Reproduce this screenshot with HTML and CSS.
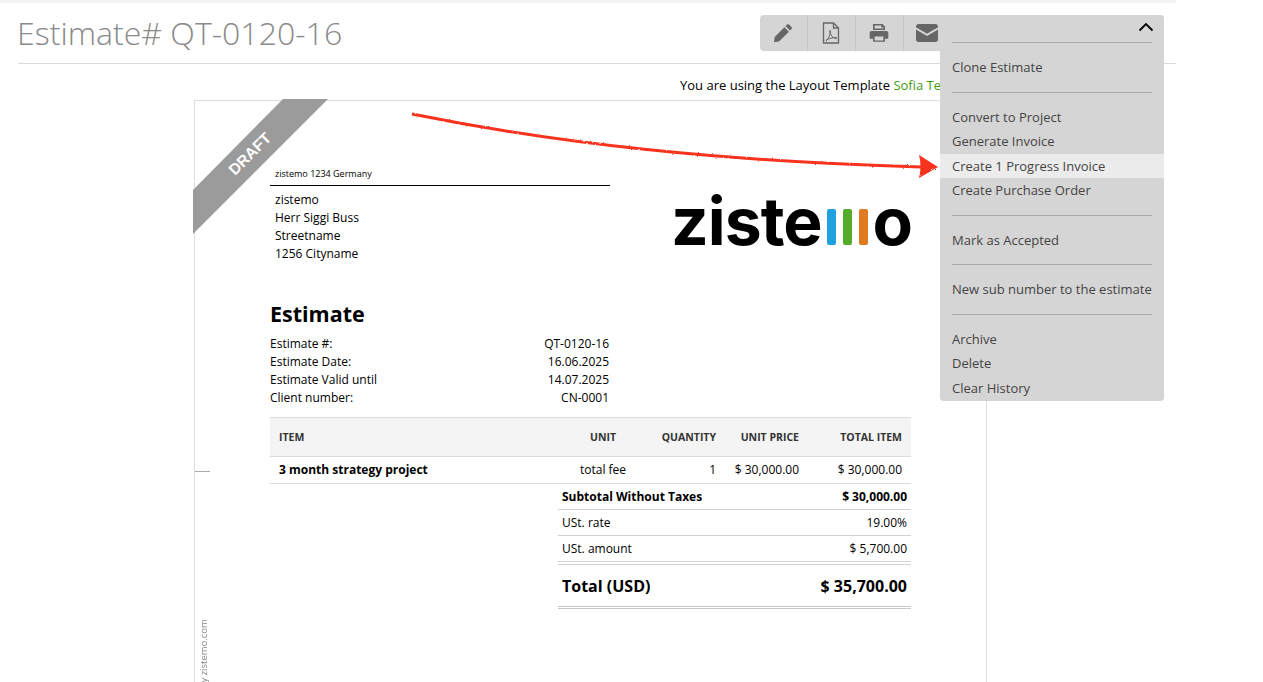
FILE: index.html
```html
<!DOCTYPE html>
<html lang="en">
<head>
<meta charset="utf-8">
<title>Estimate# QT-0120-16</title>
<link rel="stylesheet" href="styles.css">
</head>
<body>
<div class="topbar"></div>
<main class="wrap">
  <header class="head">
    <h1 class="title">Estimate# QT-0120-16</h1>
    <div class="toolbar">
      <button class="tool" aria-label="Edit"><svg width="20" height="20" viewBox="0 0 20 20"><path class="ic" d="M14 1.6c.6-.6 1.500-.6 2 0l2.500 2.500c.6.5.6 1.400 0 2L17 7.600 12.500 3.100zM11.400 4.200l4.500 4.500L6 18.600 1 19.300l.7-5.200z"/></svg></button>
      <button class="tool" aria-label="PDF"><svg width="20" height="22" viewBox="0 0 20 22"><path class="ol" d="M2.500 1h10l5 5v15h-15zM12.500 1v5h5"/><path class="ol thin" d="M5 18.500c2-1 4-4.500 4.500-9 .2-1.500-1-1.500-.8 0 .6 3.500 3 6.500 6.300 7 1.300.2 1.300-1-.2-1-3.300 0-7 1-9.300 2.500-.8.600-.5 1 .5.500z"/></svg></button>
      <button class="tool" aria-label="Print"><svg width="20" height="20" viewBox="0 0 20 20"><path class="ic" fill-rule="evenodd" d="M4 1h9.500L16 3.500V7H4zM5.600 2.600v3h8.800V4.500h-2.200V2.600zM2.500 8h15c1 0 1.800.8 1.800 1.800v5c0 .6-.4 1-1 1H16v3H4v-3H1.700c-.6 0-1-.4-1-1v-5C.7 8.800 1.500 8 2.500 8zM5.600 13.500v4h8.800v-4z"/></svg></button>
      <button class="tool" aria-label="Email"><svg width="22" height="18" viewBox="0 0 22 18"><path class="ic" d="M2.500 0h17C20.900 0 22 1 22 2.300v.9l-11 6.500L0 3.200v-.9C0 1 1.100 0 2.500 0zM0 5.500l11 6.600 11-6.600v10C22 16.900 20.900 18 19.500 18h-17C1.100 18 0 16.900 0 15.500z"/></svg></button>
    </div>
  </header>

  <nav class="menu">
    <div class="menu-top"><svg width="16" height="10" viewBox="0 0 16 10"><path d="M1.500 8.500 8 2l6.500 6.500" fill="none" stroke="#000" stroke-width="1.800"/></svg></div>
    <hr class="sep">
    <a class="item">Clone Estimate</a>
    <hr class="sep">
    <a class="item">Convert to Project</a>
    <a class="item">Generate Invoice</a>
    <a class="item active">Create 1 Progress Invoice</a>
    <a class="item">Create Purchase Order</a>
    <hr class="sep">
    <a class="item">Mark as Accepted</a>
    <hr class="sep">
    <a class="item">New sub number to the estimate</a>
    <hr class="sep">
    <a class="item">Archive</a>
    <a class="item">Delete</a>
    <a class="item">Clear History</a>
  </nav>

  <div class="doc-column">
    <p class="template">You are using the Layout Template <span class="green">Sofia Template</span></p>
    <article class="paper">
      <div class="ribbon"><span class="ribbon-text">DRAFT</span></div>
      <div class="fold"></div>
      <div class="powered">Powered by zistemo.com</div>

      <section class="top">
        <div class="address">
          <div class="sender">zistemo 1234 Germany</div>
          <div class="recipient">zistemo<br>Herr Siggi Buss<br>Streetname<br>1256 Cityname</div>
        </div>
        <div class="logo"><span class="logo-text">ziste</span><i class="bar b1"></i><i class="bar b2"></i><i class="bar b3"></i><span>o</span></div>
      </section>

      <h2 class="doc-title">Estimate</h2>
      <dl class="meta">
        <dt>Estimate #:</dt><dd>QT-0120-16</dd>
        <dt>Estimate Date:</dt><dd>16.06.2025</dd>
        <dt>Estimate Valid until</dt><dd>14.07.2025</dd>
        <dt>Client number:</dt><dd>CN-0001</dd>
      </dl>

      <div class="items head-row">
        <div>ITEM</div><div class="c">UNIT</div><div class="r">QUANTITY</div><div class="r">UNIT PRICE</div><div class="r">TOTAL ITEM</div>
      </div>
      <div class="items body-row">
        <div class="b">3 month strategy project</div><div class="c">total fee</div><div class="r">1</div><div class="r">$ 30,000.00</div><div class="r">$ 30,000.00</div>
      </div>

      <div class="totals">
        <div class="t-row b"><span>Subtotal Without Taxes</span><span>$ 30,000.00</span></div>
        <div class="t-row"><span>USt. rate</span><span>19.00%</span></div>
        <div class="t-row"><span>USt. amount</span><span>$ 5,700.00</span></div>
        <div class="t-row grand"><span>Total (USD)</span><span>$ 35,700.00</span></div>
      </div>
    </article>
  </div>
</main>

<svg class="arrow" width="1263" height="682" viewBox="0 0 1263 682" aria-hidden="true">
  <defs>
    <filter id="rough" x="-2%" y="-20%" width="104%" height="140%">
      <feTurbulence type="fractalNoise" baseFrequency="0.35" numOctaves="2" seed="4"/>
      <feDisplacementMap in="SourceGraphic" scale="2.200"/>
    </filter>
  </defs>
  <g filter="url(#rough)">
    <path d="M412 114C560 144 720 161 921 167" fill="none" stroke="#f8321f" stroke-width="3"/>
    <path d="M919 155l19 12-19 11c2-8 2-15 0-23z" fill="#f8321f"/>
  </g>
</svg>
</body>
</html>
```
FILE: styles.css
```css
* { box-sizing: border-box; }
html, body { margin: 0; height: 682px; overflow: hidden; background: #fff; }
body { font-family: "Open Sans", sans-serif; font-size: 12px; color: #000; position: relative; }

.topbar { width: 1176px; height: 3px; background: #f4f4f4; }
.wrap { width: 1176px; padding-left: 18px; position: relative; }

.head { height: 61px; display: flex; justify-content: space-between; border-bottom: 1px solid #dcdcdc; padding-top: 11px; padding-right: 12px; }
.title { margin: 0 0 0 -1px; font-size: 32.100px; line-height: 37px; font-weight: 300; color: #8a8a8a; }
.toolbar { width: 404px; height: 36px; margin-top: 1px; background: #d5d5d5; border-radius: 4px; display: flex; }
.tool { width: 48px; height: 36px; padding: 0 2px 0 0; border: 0; border-right: 1px solid #c4c4c4; background: none; display: flex; align-items: center; justify-content: center; }
.tool:last-child { border-right: 0; }
.ic { fill: #666; }
.ol { fill: none; stroke: #666; stroke-width: 1.3; }
.ol.thin { stroke-width: 1; }

.menu { position: absolute; left: 940px; top: 12px; width: 224px; background: #d5d5d5; border-radius: 0 4px 4px 4px; display: flex; flex-direction: column; height: 386px; z-index: 2; }
.menu-top { height: 27px; padding: 7px 10px 0 0; display: flex; justify-content: flex-end; align-items: flex-start; }
.sep { margin: 0 12px 12px; height: 1px; border: 0; background: #a9a9a9; }
.item + .sep { margin-top: 12px; }
.item { font-size: 13px; line-height: 24.5px; height: 24.500px; padding: 0 12px; color: #444; white-space: nowrap; }
.item.active { background: #ececec; }

.doc-column { width: 793px; margin-left: 176px; }
.template { margin: 0; height: 36px; padding-right: 3.500px; line-height: 43px; font-size: 13px; text-align: right; white-space: nowrap; }
.green { color: #3f9c12; }

.paper { position: relative; height: 700px; border: 1px solid #dedede; border-bottom: 0; padding: 66px 75px 0 75px; }
.ribbon { position: absolute; left: -2px; top: -2px; width: 135px; height: 135px; background: #9b9b9b; clip-path: polygon(90px 0, 135px 0, 0 135px, 0 91px); }
.ribbon-text { position: absolute; left: 27px; top: 46px; width: 60px; text-align: center; color: #fff; font: bold 15.500px/18px "Liberation Sans", sans-serif; transform: rotate(-45deg); }
.fold { position: absolute; left: 0; top: 370px; width: 15px; height: 1px; background: #a9a9a9; }
.powered { position: absolute; left: 2px; top: 499px; width: 14px; height: 130px; writing-mode: vertical-rl; transform: rotate(180deg); font-size: 9.500px; line-height: 14px; color: #888; white-space: nowrap; text-align: left; }

.top { display: flex; justify-content: space-between; height: 132px; }
.address { width: 340px; }
.sender { font-size: 9px; line-height: 13px; padding: 0 0 5px 5px; border-bottom: 1px solid #000; height: 19px; }
.recipient { font-size: 12px; line-height: 18px; padding: 5px 0 0 5px; }
.logo { display: flex; align-items: flex-end; height: 78px; margin-top: 15px; margin-right: -2px; font-family: Inter, sans-serif; font-weight: 700; font-size: 66px; line-height: 78px; color: #000; white-space: nowrap; }
.logo-text { letter-spacing: -1px; }
.bar { width: 9px; height: 36px; margin: 0 0 15px 7px; border-radius: 2px; display: block; }
.b1 { background: #1ea3e0; margin-left: 5px; }
.b2 { background: #55ab2a; }
.b3 { background: #e27a22; margin-right: 5px; }

.doc-title { margin: 0; font-size: 21.500px; line-height: 30px; font-weight: 700; }
.meta { margin: 6px 0 10px; width: 340px; padding-right: 1px; display: grid; grid-template-columns: 1fr auto; line-height: 18px; font-size: 12px; }
.meta dt, .meta dd { margin: 0; }
.meta dd { text-align: right; }

.items { display: grid; grid-template-columns: 270px 108px 59px 83px 1fr; padding: 0 9px; align-items: center; border-bottom: 1px solid #dcdcdc; }
.head-row { height: 40px; background: #f4f4f4; border-top: 1px solid #dcdcdc; font-size: 10.500px; font-weight: 700; color: #333; }
.body-row { height: 27px; padding-bottom: 2px; font-size: 12px; }
.r { text-align: right; }
.c { text-align: center; }
.b { font-weight: 700; }

.totals { margin-left: 288px; }
.t-row { height: 26px; padding: 0 4px; display: flex; justify-content: space-between; align-items: center; border-bottom: 1px solid #d2d2d2; font-size: 12px; }
.grand { height: 45px; margin-top: 2px; border-top: 1px solid #d2d2d2; border-bottom: 3px double #c8c8c8; font-size: 16px; font-weight: 700; }

.arrow { position: absolute; left: 0; top: 0; pointer-events: none; }
```
